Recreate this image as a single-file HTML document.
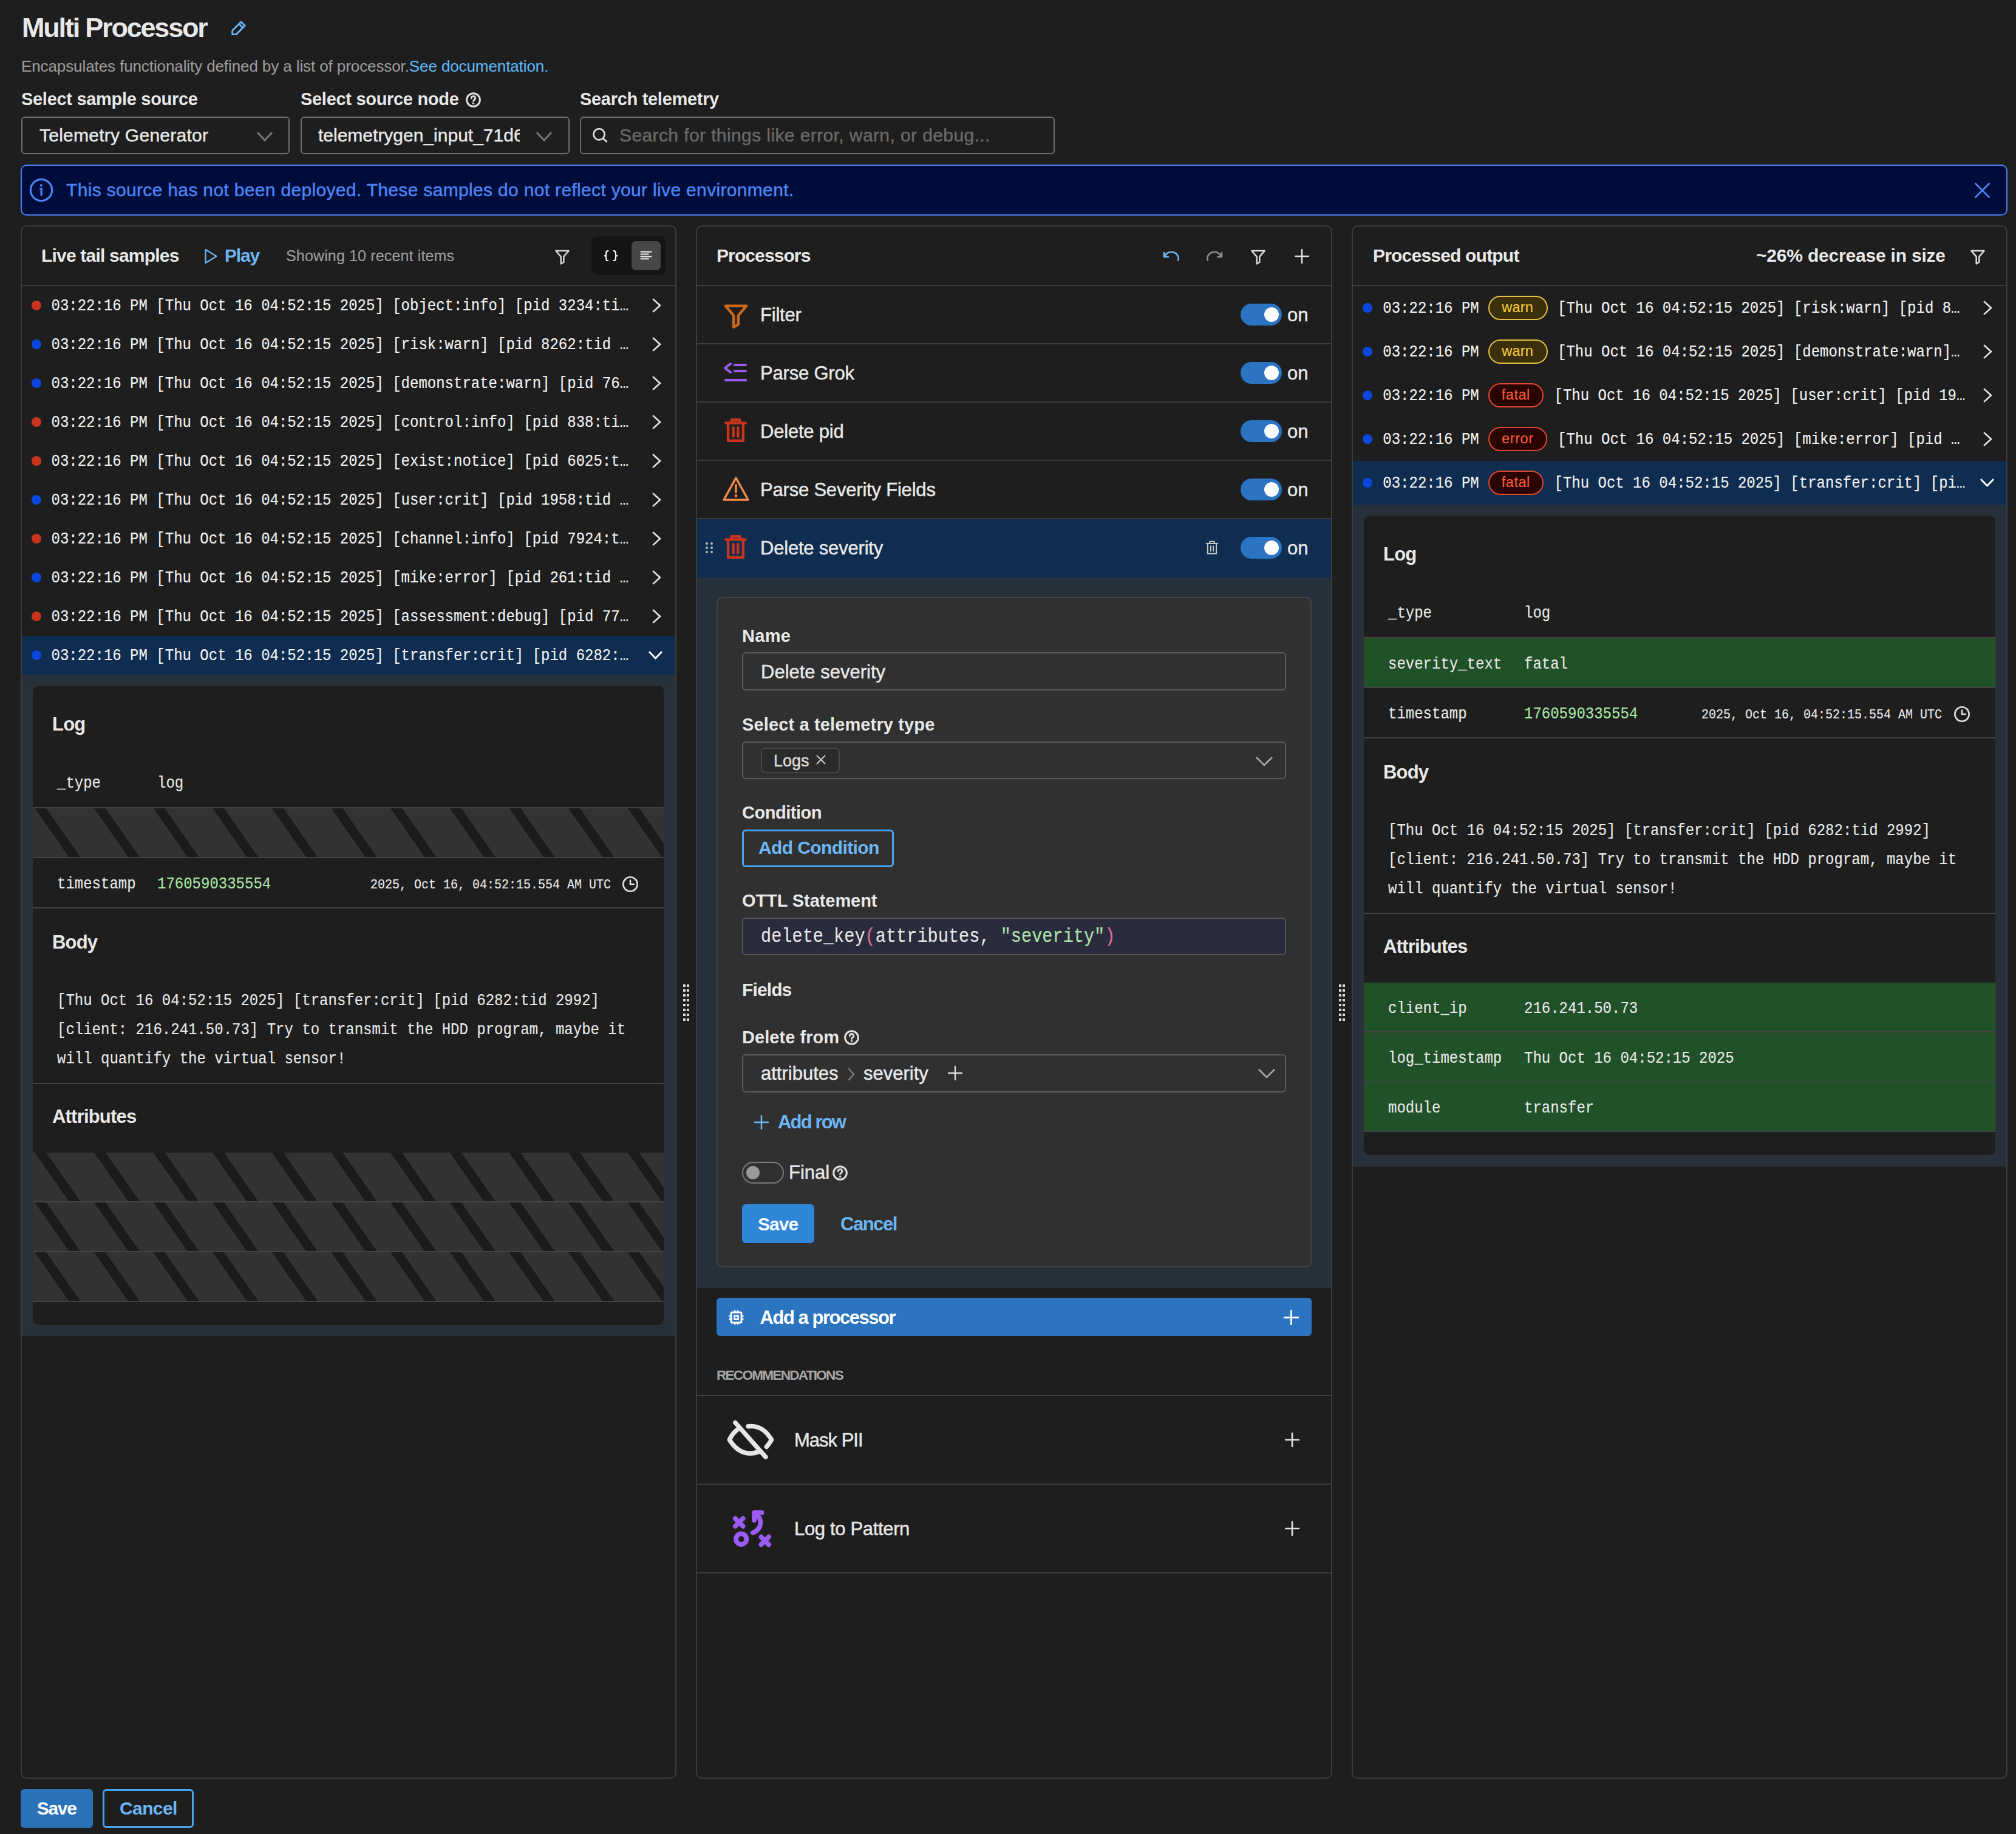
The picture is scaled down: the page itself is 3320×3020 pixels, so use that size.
<!DOCTYPE html><html><head><meta charset="utf-8"><style>
html,body{margin:0;padding:0;background:#1e1e1e;}
body{width:3320px;height:3020px;position:relative;overflow:hidden;}
.r{position:absolute;box-sizing:border-box;}
.t{position:absolute;white-space:pre;line-height:1;}
.s{font-family:"Liberation Sans", sans-serif;}
.m{font-family:"Liberation Mono", monospace;}
@media (max-width: 2400px){ body{zoom:0.5;} }
</style></head><body>
<div class="t s" style="left:36.0px;top:23.2px;font-size:45px;color:#e8e8e8;font-weight:700;letter-spacing:-2.2px;">Multi Processor</div>
<svg class="r" style="left:370px;top:25px;width:50px;height:40px;" viewBox="0 0 2016 1613" fill="none"><path d="M510 1275V1020L1090 440L1345 695L765 1275Z M955 580L1210 835" stroke="#6cb6f5" stroke-width="115" stroke-linejoin="round"/></svg>
<div class="t s" style="left:35.0px;top:96.3px;font-size:26px;color:#9b9b9b;letter-spacing:-0.1px;-webkit-text-stroke:0.15px #9b9b9b;">Encapsulates functionality defined by a list of processor.<span style="color:#5cb6f5;-webkit-text-stroke:0.15px #5cb6f5">See documentation.</span></div>
<div class="t s" style="left:35.0px;top:149.0px;font-size:29px;color:#e8e8e8;font-weight:700;letter-spacing:-0.3px;">Select sample source</div>
<div class="t s" style="left:495.0px;top:149.0px;font-size:29px;color:#e8e8e8;font-weight:700;letter-spacing:-0.3px;">Select source node</div>
<svg class="r" style="left:766.5px;top:152.0px;width:25px;height:25px;" viewBox="0 0 24 24" fill="none"><circle cx="12" cy="12" r="10.4" stroke="#e0e0e0" stroke-width="2.9"/><path d="M8.9 9.4a3.1 3.1 0 1 1 4.6 2.6c-.9.5-1.5 1.1-1.5 2.1" stroke="#e0e0e0" stroke-width="2.7" stroke-linecap="round"/><circle cx="12" cy="17.6" r="1.6" fill="#e0e0e0"/></svg>
<div class="t s" style="left:955.0px;top:149.0px;font-size:29px;color:#e8e8e8;font-weight:700;letter-spacing:-0.3px;">Search telemetry</div>
<div class="r" style="left:35px;top:192px;width:442px;height:62px;border:2px solid #6e6e6e;border-radius:6px;"></div>
<div class="t s" style="left:65.0px;top:207.6px;font-size:30px;color:#e8e8e8;letter-spacing:0.25px;-webkit-text-stroke:0.45px #e8e8e8;">Telemetry Generator</div>
<svg class="r" style="left:422px;top:216px;width:28px;height:17px;overflow:visible;" viewBox="0 0 28 17" fill="none"><path d="M2 2 L14.0 15 L26 2" stroke="#777777" stroke-width="3" stroke-linecap="butt"/></svg>
<div class="r" style="left:495px;top:192px;width:443px;height:62px;border:2px solid #6e6e6e;border-radius:6px;"></div>
<div class="r" style="left:524px;top:200px;width:332px;height:46px;overflow:hidden">
<div class="t s" style="left:0.0px;top:7.6px;font-size:30px;color:#e8e8e8;-webkit-text-stroke:0.45px #e8e8e8;">telemetrygen_input_71d6f0</div>
</div>
<svg class="r" style="left:882px;top:216px;width:28px;height:17px;overflow:visible;" viewBox="0 0 28 17" fill="none"><path d="M2 2 L14.0 15 L26 2" stroke="#777777" stroke-width="3" stroke-linecap="butt"/></svg>
<div class="r" style="left:955px;top:192px;width:782px;height:62px;border:2px solid #6e6e6e;border-radius:6px;"></div>
<svg class="r" style="left:974px;top:208px;width:30px;height:30px;" viewBox="0 0 30 30" fill="none"><circle cx="12.6" cy="13.2" r="9.1" stroke="#dddddd" stroke-width="2.8"/><path d="M19.4 20L25.6 25.8" stroke="#dddddd" stroke-width="2.8" stroke-linecap="butt"/></svg>
<div class="t s" style="left:1020.0px;top:207.6px;font-size:30px;color:#6a6a6a;letter-spacing:0.4px;-webkit-text-stroke:0.45px #6a6a6a;">Search for things like error, warn, or debug...</div>
<div class="r" style="left:34px;top:271px;width:3272px;height:84px;background:#000d3b;border:2px solid #4a7ef4;border-radius:10px;"></div>
<svg class="r" style="left:48px;top:293px;width:40px;height:40px;" viewBox="0 0 24 24" fill="none"><circle cx="12" cy="12" r="10.6" stroke="#4d85f7" stroke-width="1.9"/><path d="M11.2 10.8h.9v6.2" stroke="#4d85f7" stroke-width="1.9" stroke-linecap="round"/><circle cx="11.9" cy="7.3" r="1.2" fill="#4d85f7"/></svg>
<div class="t s" style="left:109.0px;top:297.9px;font-size:30px;color:#4d85f7;letter-spacing:0.33px;-webkit-text-stroke:0.45px #4d85f7;">This source has not been deployed. These samples do not reflect your live environment.</div>
<svg class="r" style="left:3251px;top:300px;width:27px;height:27px;" viewBox="0 0 27 27" fill="none"><path d="M1.5 1.5L25.5 25.5M25.5 1.5L1.5 25.5" stroke="#4d85f7" stroke-width="2.8"/></svg>
<div class="r" style="left:34px;top:371px;width:1080px;height:2558px;background:#1e1e1e;border:2px solid #3d3d3d;border-radius:10px;"></div>
<div class="r" style="left:36px;top:469px;width:1076px;height:2px;background:#3d3d3d;"></div>
<div class="t s" style="left:68.0px;top:405.6px;font-size:30px;color:#e8e8e8;font-weight:700;letter-spacing:-0.8px;">Live tail samples</div>
<svg class="r" style="left:336px;top:409px;width:23px;height:26px;" viewBox="0 0 23 26" fill="none"><path d="M2.5 2L20.5 13L2.5 24z" stroke="#6cb6f5" stroke-width="2.2" stroke-linejoin="round"/></svg>
<div class="t s" style="left:370.0px;top:405.6px;font-size:30px;color:#6cb6f5;font-weight:700;letter-spacing:-1.2px;">Play</div>
<div class="t s" style="left:471.0px;top:409.3px;font-size:25px;color:#9b9b9b;letter-spacing:0.15px;-webkit-text-stroke:0.2px #9b9b9b;">Showing 10 recent items</div>
<svg class="r" style="left:912px;top:409px;width:28px;height:28px;" viewBox="0 0 24 24" fill="none"><path d="M3 3.5h18l-7 8.2v7.8l-4 2.2v-10z" stroke="#d0d0d0" stroke-width="2.2" stroke-linejoin="round"/></svg>
<div class="r" style="left:974px;top:389px;width:122px;height:64px;background:#141414;border-radius:10px;"></div>
<svg class="r" style="left:994px;top:411.5px;width:24px;height:18.5px;" viewBox="0 0 26 20" fill="none"><path d="M8 1.2C5.6 1.2 4.6 2 4.6 4V7.6C4.6 9 3.6 10 1.6 10C3.6 10 4.6 11 4.6 12.4V16C4.6 18 5.6 18.8 8 18.8M18 1.2C20.4 1.2 21.4 2 21.4 4V7.6C21.4 9 22.4 10 24.4 10C22.4 10 21.4 11 21.4 12.4V16C21.4 18 20.4 18.8 18 18.8" stroke="#ffffff" stroke-width="2.2" stroke-linecap="round" stroke-linejoin="round"/></svg>
<div class="r" style="left:1040px;top:397px;width:48px;height:48px;background:#474747;border-radius:7px;"></div>
<svg class="r" style="left:1054px;top:413px;width:20px;height:15px;" viewBox="0 0 20 15" fill="none"><path d="M1.5 1.8H18.5M1.5 5.6H14M1.5 9.4H18.5M1.5 13.2H14" stroke="#f0f0f0" stroke-width="2" stroke-linecap="round"/></svg>
<div class="r" style="left:52px;top:495px;width:16px;height:16px;background:#c8341c;border-radius:8px;"></div>
<div class="t m" style="left:84.5px;top:493.1px;font-size:24px;color:#f2f2f2;transform:scaleY(1.14);transform-origin:0 18.39px;-webkit-text-stroke:0.15px #f2f2f2;">03:22:16 PM [Thu Oct 16 04:52:15 2025] [object:info] [pid 3234:ti…</div>
<svg class="r" style="left:1074px;top:491px;width:15px;height:24px;" viewBox="0 0 15 24" fill="none"><path d="M2 2 L13 12.0 L2 22" stroke="#e8e8e8" stroke-width="2.6" stroke-linecap="square"/></svg>
<div class="r" style="left:52px;top:559px;width:16px;height:16px;background:#0b47dd;border-radius:8px;"></div>
<div class="t m" style="left:84.5px;top:557.1px;font-size:24px;color:#f2f2f2;transform:scaleY(1.14);transform-origin:0 18.39px;-webkit-text-stroke:0.15px #f2f2f2;">03:22:16 PM [Thu Oct 16 04:52:15 2025] [risk:warn] [pid 8262:tid …</div>
<svg class="r" style="left:1074px;top:555px;width:15px;height:24px;" viewBox="0 0 15 24" fill="none"><path d="M2 2 L13 12.0 L2 22" stroke="#e8e8e8" stroke-width="2.6" stroke-linecap="square"/></svg>
<div class="r" style="left:52px;top:623px;width:16px;height:16px;background:#0b47dd;border-radius:8px;"></div>
<div class="t m" style="left:84.5px;top:621.1px;font-size:24px;color:#f2f2f2;transform:scaleY(1.14);transform-origin:0 18.39px;-webkit-text-stroke:0.15px #f2f2f2;">03:22:16 PM [Thu Oct 16 04:52:15 2025] [demonstrate:warn] [pid 76…</div>
<svg class="r" style="left:1074px;top:619px;width:15px;height:24px;" viewBox="0 0 15 24" fill="none"><path d="M2 2 L13 12.0 L2 22" stroke="#e8e8e8" stroke-width="2.6" stroke-linecap="square"/></svg>
<div class="r" style="left:52px;top:687px;width:16px;height:16px;background:#c8341c;border-radius:8px;"></div>
<div class="t m" style="left:84.5px;top:685.1px;font-size:24px;color:#f2f2f2;transform:scaleY(1.14);transform-origin:0 18.39px;-webkit-text-stroke:0.15px #f2f2f2;">03:22:16 PM [Thu Oct 16 04:52:15 2025] [control:info] [pid 838:ti…</div>
<svg class="r" style="left:1074px;top:683px;width:15px;height:24px;" viewBox="0 0 15 24" fill="none"><path d="M2 2 L13 12.0 L2 22" stroke="#e8e8e8" stroke-width="2.6" stroke-linecap="square"/></svg>
<div class="r" style="left:52px;top:751px;width:16px;height:16px;background:#c8341c;border-radius:8px;"></div>
<div class="t m" style="left:84.5px;top:749.1px;font-size:24px;color:#f2f2f2;transform:scaleY(1.14);transform-origin:0 18.39px;-webkit-text-stroke:0.15px #f2f2f2;">03:22:16 PM [Thu Oct 16 04:52:15 2025] [exist:notice] [pid 6025:t…</div>
<svg class="r" style="left:1074px;top:747px;width:15px;height:24px;" viewBox="0 0 15 24" fill="none"><path d="M2 2 L13 12.0 L2 22" stroke="#e8e8e8" stroke-width="2.6" stroke-linecap="square"/></svg>
<div class="r" style="left:52px;top:815px;width:16px;height:16px;background:#0b47dd;border-radius:8px;"></div>
<div class="t m" style="left:84.5px;top:813.1px;font-size:24px;color:#f2f2f2;transform:scaleY(1.14);transform-origin:0 18.39px;-webkit-text-stroke:0.15px #f2f2f2;">03:22:16 PM [Thu Oct 16 04:52:15 2025] [user:crit] [pid 1958:tid …</div>
<svg class="r" style="left:1074px;top:811px;width:15px;height:24px;" viewBox="0 0 15 24" fill="none"><path d="M2 2 L13 12.0 L2 22" stroke="#e8e8e8" stroke-width="2.6" stroke-linecap="square"/></svg>
<div class="r" style="left:52px;top:879px;width:16px;height:16px;background:#c8341c;border-radius:8px;"></div>
<div class="t m" style="left:84.5px;top:877.1px;font-size:24px;color:#f2f2f2;transform:scaleY(1.14);transform-origin:0 18.39px;-webkit-text-stroke:0.15px #f2f2f2;">03:22:16 PM [Thu Oct 16 04:52:15 2025] [channel:info] [pid 7924:t…</div>
<svg class="r" style="left:1074px;top:875px;width:15px;height:24px;" viewBox="0 0 15 24" fill="none"><path d="M2 2 L13 12.0 L2 22" stroke="#e8e8e8" stroke-width="2.6" stroke-linecap="square"/></svg>
<div class="r" style="left:52px;top:943px;width:16px;height:16px;background:#0b47dd;border-radius:8px;"></div>
<div class="t m" style="left:84.5px;top:941.1px;font-size:24px;color:#f2f2f2;transform:scaleY(1.14);transform-origin:0 18.39px;-webkit-text-stroke:0.15px #f2f2f2;">03:22:16 PM [Thu Oct 16 04:52:15 2025] [mike:error] [pid 261:tid …</div>
<svg class="r" style="left:1074px;top:939px;width:15px;height:24px;" viewBox="0 0 15 24" fill="none"><path d="M2 2 L13 12.0 L2 22" stroke="#e8e8e8" stroke-width="2.6" stroke-linecap="square"/></svg>
<div class="r" style="left:52px;top:1007px;width:16px;height:16px;background:#c8341c;border-radius:8px;"></div>
<div class="t m" style="left:84.5px;top:1005.1px;font-size:24px;color:#f2f2f2;transform:scaleY(1.14);transform-origin:0 18.39px;-webkit-text-stroke:0.15px #f2f2f2;">03:22:16 PM [Thu Oct 16 04:52:15 2025] [assessment:debug] [pid 77…</div>
<svg class="r" style="left:1074px;top:1003px;width:15px;height:24px;" viewBox="0 0 15 24" fill="none"><path d="M2 2 L13 12.0 L2 22" stroke="#e8e8e8" stroke-width="2.6" stroke-linecap="square"/></svg>
<div class="r" style="left:36px;top:1047px;width:1076px;height:64px;background:#0f2d50;"></div>
<div class="r" style="left:52px;top:1071px;width:16px;height:16px;background:#0b47dd;border-radius:8px;"></div>
<div class="t m" style="left:84.5px;top:1069.1px;font-size:24px;color:#f2f2f2;transform:scaleY(1.14);transform-origin:0 18.39px;-webkit-text-stroke:0.15px #f2f2f2;">03:22:16 PM [Thu Oct 16 04:52:15 2025] [transfer:crit] [pid 6282:…</div>
<svg class="r" style="left:1067.4px;top:1070.8px;width:25px;height:15px;overflow:visible;" viewBox="0 0 25 15" fill="none"><path d="M2 2 L12.5 13 L23 2" stroke="#ffffff" stroke-width="2.8" stroke-linecap="butt"/></svg>
<div class="r" style="left:36px;top:1111px;width:1076px;height:1089px;background:#27313c;"></div>
<div class="r" style="left:52px;top:1127px;width:1043px;height:1057px;background:#1e1e1e;border:2px solid #313131;border-radius:11px;"></div>
<div class="t s" style="left:86.0px;top:1176.7px;font-size:31px;color:#e8e8e8;font-weight:700;letter-spacing:-0.8px;">Log</div>
<div class="t m" style="left:94.0px;top:1278.6px;font-size:24px;color:#e8e8e8;transform:scaleY(1.14);transform-origin:0 18.39px;-webkit-text-stroke:0.15px #e8e8e8;">_type</div>
<div class="t m" style="left:259.0px;top:1278.6px;font-size:24px;color:#e8e8e8;transform:scaleY(1.14);transform-origin:0 18.39px;-webkit-text-stroke:0.15px #e8e8e8;">log</div>
<div class="r" style="left:54px;top:1329px;width:1039px;height:2px;background:#444444;"></div>
<div class="r" style="left:54px;top:1331px;width:1039px;height:80px;background:repeating-linear-gradient(55deg,#333333 0px,#333333 48.5px,#1b1b1b 48.5px,#1b1b1b 64px,#333333 64px,#333333 80px);"></div>
<div class="r" style="left:54px;top:1411px;width:1039px;height:2px;background:#444444;"></div>
<div class="t m" style="left:94.0px;top:1444.6px;font-size:24px;color:#e8e8e8;transform:scaleY(1.14);transform-origin:0 18.39px;-webkit-text-stroke:0.15px #e8e8e8;">timestamp</div>
<div class="t m" style="left:259.0px;top:1444.6px;font-size:24px;color:#a8e6a3;transform:scaleY(1.14);transform-origin:0 18.39px;-webkit-text-stroke:0.15px #a8e6a3;">1760590335554</div>
<div class="t m" style="left:610.0px;top:1447.7px;font-size:20px;color:#e8e8e8;transform:scaleY(1.14);transform-origin:0 15.32px;-webkit-text-stroke:0.15px #e8e8e8;">2025, Oct 16, 04:52:15.554 AM UTC</div>
<svg class="r" style="left:1024px;top:1442px;width:28px;height:28px;" viewBox="0 0 24 24" fill="none"><circle cx="12" cy="12" r="10" stroke="#e0e0e0" stroke-width="2.2"/><path d="M12 6.5V12h5" stroke="#e0e0e0" stroke-width="2.2" stroke-linecap="round"/></svg>
<div class="r" style="left:54px;top:1494px;width:1039px;height:2px;background:#444444;"></div>
<div class="t s" style="left:86.0px;top:1535.7px;font-size:31px;color:#e8e8e8;font-weight:700;letter-spacing:-0.8px;">Body</div>
<div class="t m" style="left:94.0px;top:1636.6px;font-size:24px;color:#e8e8e8;transform:scaleY(1.14);transform-origin:0 18.39px;-webkit-text-stroke:0.15px #e8e8e8;">[Thu Oct 16 04:52:15 2025] [transfer:crit] [pid 6282:tid 2992]</div>
<div class="t m" style="left:94.0px;top:1684.6px;font-size:24px;color:#e8e8e8;transform:scaleY(1.14);transform-origin:0 18.39px;-webkit-text-stroke:0.15px #e8e8e8;">[client: 216.241.50.73] Try to transmit the HDD program, maybe it</div>
<div class="t m" style="left:94.0px;top:1732.6px;font-size:24px;color:#e8e8e8;transform:scaleY(1.14);transform-origin:0 18.39px;-webkit-text-stroke:0.15px #e8e8e8;">will quantify the virtual sensor!</div>
<div class="r" style="left:54px;top:1783px;width:1039px;height:2px;background:#444444;"></div>
<div class="t s" style="left:86.0px;top:1822.7px;font-size:31px;color:#e8e8e8;font-weight:700;letter-spacing:-0.8px;">Attributes</div>
<div class="r" style="left:54px;top:1898px;width:1039px;height:80px;background:repeating-linear-gradient(55deg,#333333 0px,#333333 48.5px,#1b1b1b 48.5px,#1b1b1b 64px,#333333 64px,#333333 80px);"></div>
<div class="r" style="left:54px;top:1978px;width:1039px;height:2px;background:#444444;"></div>
<div class="r" style="left:54px;top:1980px;width:1039px;height:80px;background:repeating-linear-gradient(55deg,#333333 0px,#333333 48.5px,#1b1b1b 48.5px,#1b1b1b 64px,#333333 64px,#333333 80px);"></div>
<div class="r" style="left:54px;top:2060px;width:1039px;height:2px;background:#444444;"></div>
<div class="r" style="left:54px;top:2062px;width:1039px;height:80px;background:repeating-linear-gradient(55deg,#333333 0px,#333333 48.5px,#1b1b1b 48.5px,#1b1b1b 64px,#333333 64px,#333333 80px);"></div>
<div class="r" style="left:54px;top:2142px;width:1039px;height:2px;background:#444444;"></div>
<div class="r" style="left:1146px;top:371px;width:1048px;height:2558px;background:#1e1e1e;border:2px solid #3d3d3d;border-radius:10px;"></div>
<div class="r" style="left:1148px;top:469px;width:1044px;height:2px;background:#3d3d3d;"></div>
<div class="t s" style="left:1180.0px;top:405.6px;font-size:30px;color:#e8e8e8;font-weight:700;letter-spacing:-0.9px;">Processors</div>
<svg class="r" style="left:1914px;top:414px;width:28px;height:16px;" viewBox="0 0 28 16" fill="none"><path d="M26 15A11 10 0 0 0 4 8" stroke="#6cb6f5" stroke-width="2.6" stroke-linecap="round"/><path d="M3 2V9H10" stroke="#6cb6f5" stroke-width="2.6" stroke-linecap="round" stroke-linejoin="round"/></svg>
<svg class="r" style="left:1987px;top:414px;width:28px;height:16px;" viewBox="0 0 28 16" fill="none"><path d="M2 15A11 10 0 0 1 24 8" stroke="#8a8a8a" stroke-width="2.6" stroke-linecap="round"/><path d="M25 2V9H18" stroke="#8a8a8a" stroke-width="2.6" stroke-linecap="round" stroke-linejoin="round"/></svg>
<svg class="r" style="left:2058px;top:409px;width:28px;height:28px;" viewBox="0 0 24 24" fill="none"><path d="M3 3.5h18l-7 8.2v7.8l-4 2.2v-10z" stroke="#d8d8d8" stroke-width="2.2" stroke-linejoin="round"/></svg>
<svg class="r" style="left:2132px;top:410px;width:24px;height:24px;" viewBox="0 0 24 24" fill="none"><path d="M12.0 1V23M1 12.0H23" stroke="#e0e0e0" stroke-width="2.6" stroke-linecap="round"/></svg>
<div class="r" style="left:1148px;top:565px;width:1044px;height:2px;background:#3d3d3d;"></div>
<div class="t s" style="left:1252.0px;top:502.7px;font-size:31px;color:#e8e8e8;letter-spacing:-0.2px;-webkit-text-stroke:0.45px #e8e8e8;">Filter</div>
<div class="r" style="left:2043px;top:499.5px;width:68px;height:36px;background:#2b74c4;border-radius:18px;"></div>
<div class="r" style="left:2082.3px;top:505.5px;width:24px;height:24px;background:#ffffff;border-radius:12px;"></div>
<div class="t s" style="left:2120.0px;top:502.7px;font-size:31px;color:#e8e8e8;-webkit-text-stroke:0.45px #e8e8e8;">on</div>
<div class="r" style="left:1148px;top:661px;width:1044px;height:2px;background:#3d3d3d;"></div>
<div class="t s" style="left:1252.0px;top:598.7px;font-size:31px;color:#e8e8e8;letter-spacing:-0.2px;-webkit-text-stroke:0.45px #e8e8e8;">Parse Grok</div>
<div class="r" style="left:2043px;top:595.5px;width:68px;height:36px;background:#2b74c4;border-radius:18px;"></div>
<div class="r" style="left:2082.3px;top:601.5px;width:24px;height:24px;background:#ffffff;border-radius:12px;"></div>
<div class="t s" style="left:2120.0px;top:598.7px;font-size:31px;color:#e8e8e8;-webkit-text-stroke:0.45px #e8e8e8;">on</div>
<div class="r" style="left:1148px;top:757px;width:1044px;height:2px;background:#3d3d3d;"></div>
<div class="t s" style="left:1252.0px;top:694.7px;font-size:31px;color:#e8e8e8;letter-spacing:-0.2px;-webkit-text-stroke:0.45px #e8e8e8;">Delete pid</div>
<div class="r" style="left:2043px;top:691.5px;width:68px;height:36px;background:#2b74c4;border-radius:18px;"></div>
<div class="r" style="left:2082.3px;top:697.5px;width:24px;height:24px;background:#ffffff;border-radius:12px;"></div>
<div class="t s" style="left:2120.0px;top:694.7px;font-size:31px;color:#e8e8e8;-webkit-text-stroke:0.45px #e8e8e8;">on</div>
<div class="r" style="left:1148px;top:853px;width:1044px;height:2px;background:#3d3d3d;"></div>
<div class="t s" style="left:1252.0px;top:790.7px;font-size:31px;color:#e8e8e8;letter-spacing:-0.2px;-webkit-text-stroke:0.45px #e8e8e8;">Parse Severity Fields</div>
<div class="r" style="left:2043px;top:787.5px;width:68px;height:36px;background:#2b74c4;border-radius:18px;"></div>
<div class="r" style="left:2082.3px;top:793.5px;width:24px;height:24px;background:#ffffff;border-radius:12px;"></div>
<div class="t s" style="left:2120.0px;top:790.7px;font-size:31px;color:#e8e8e8;-webkit-text-stroke:0.45px #e8e8e8;">on</div>
<div class="r" style="left:1148px;top:855px;width:1044px;height:96px;background:#0f2d50;"></div>
<div class="t s" style="left:1252.0px;top:886.7px;font-size:31px;color:#e8e8e8;letter-spacing:-0.2px;-webkit-text-stroke:0.45px #e8e8e8;">Delete severity</div>
<div class="r" style="left:2043px;top:883.5px;width:68px;height:36px;background:#2b74c4;border-radius:18px;"></div>
<div class="r" style="left:2082.3px;top:889.5px;width:24px;height:24px;background:#ffffff;border-radius:12px;"></div>
<div class="t s" style="left:2120.0px;top:886.7px;font-size:31px;color:#e8e8e8;-webkit-text-stroke:0.45px #e8e8e8;">on</div>
<svg class="r" style="left:1189px;top:497px;width:46px;height:46px;" viewBox="0 0 24 24" fill="none"><path d="M3 3.5h18l-7 8.2v7.8l-4 2.2v-10z" stroke="#c8691e" stroke-width="2.3" stroke-linejoin="round"/></svg>
<svg class="r" style="left:1191px;top:597px;width:40px;height:32px;" viewBox="0 0 40 32" fill="none"><path d="M12 2L3 9L12 16" stroke="#9b5cf6" stroke-width="4" stroke-linecap="round" stroke-linejoin="round"/><path d="M19 4H37M19 14H37M4 29H37" stroke="#9b5cf6" stroke-width="4" stroke-linecap="round"/></svg>
<svg class="r" style="left:1192px;top:687px;width:39px;height:42px;" viewBox="0 0 20 22" fill="none"><path d="M1.5 5h17M6.5 5V2.2h7V5M3.5 5v15.3h13V5M8 9v7.5M12 9v7.5" stroke="#c8341c" stroke-width="2.3" stroke-linejoin="round" stroke-linecap="round"/></svg>
<svg class="r" style="left:1189px;top:784px;width:46px;height:42px;" viewBox="0 0 46 42" fill="none"><path d="M23 3L43 39H3z" stroke="#f08a4b" stroke-width="3.6" stroke-linejoin="round"/><path d="M23 15V26" stroke="#f08a4b" stroke-width="3.8" stroke-linecap="round"/><circle cx="23" cy="32.5" r="2.4" fill="#f08a4b"/></svg>
<svg class="r" style="left:1192px;top:879px;width:39px;height:42px;" viewBox="0 0 20 22" fill="none"><path d="M1.5 5h17M6.5 5V2.2h7V5M3.5 5v15.3h13V5M8 9v7.5M12 9v7.5" stroke="#c8341c" stroke-width="2.3" stroke-linejoin="round" stroke-linecap="round"/></svg>
<div class="r" style="left:1162px;top:893px;width:4px;height:4px;background:#bbbbbb;border-radius:2px;"></div>
<div class="r" style="left:1162px;top:900px;width:4px;height:4px;background:#bbbbbb;border-radius:2px;"></div>
<div class="r" style="left:1162px;top:907px;width:4px;height:4px;background:#bbbbbb;border-radius:2px;"></div>
<div class="r" style="left:1170px;top:893px;width:4px;height:4px;background:#bbbbbb;border-radius:2px;"></div>
<div class="r" style="left:1170px;top:900px;width:4px;height:4px;background:#bbbbbb;border-radius:2px;"></div>
<div class="r" style="left:1170px;top:907px;width:4px;height:4px;background:#bbbbbb;border-radius:2px;"></div>
<svg class="r" style="left:1985px;top:889px;width:22px;height:25px;" viewBox="0 0 20 22" fill="none"><path d="M1.5 5h17M6.5 5V2.2h7V5M3.5 5v15.3h13V5M8 9v7.5M12 9v7.5" stroke="#c8c8c8" stroke-width="1.8" stroke-linejoin="round" stroke-linecap="round"/></svg>
<div class="r" style="left:1148px;top:951px;width:1044px;height:1170px;background:#27313c;"></div>
<div class="r" style="left:1180px;top:983px;width:980px;height:1104px;background:#303030;border:2px solid #434343;border-radius:10px;"></div>
<div class="t s" style="left:1222.0px;top:1033.4px;font-size:29px;color:#e8e8e8;font-weight:700;letter-spacing:0.333px;">Name</div>
<div class="r" style="left:1222px;top:1074px;width:896px;height:63px;border:2px solid #5c5c5c;border-radius:6px;"></div>
<div class="t s" style="left:1253.0px;top:1090.5px;font-size:31px;color:#e8e8e8;-webkit-text-stroke:0.45px #e8e8e8;">Delete severity</div>
<div class="t s" style="left:1222.0px;top:1179.2px;font-size:29px;color:#e8e8e8;font-weight:700;letter-spacing:0.136px;">Select a telemetry type</div>
<div class="r" style="left:1222px;top:1221px;width:896px;height:62px;border:2px solid #5c5c5c;border-radius:6px;"></div>
<div class="r" style="left:1253px;top:1231px;width:130px;height:42px;background:#2b2b2b;border:2px solid #474747;border-radius:7px;"></div>
<div class="t s" style="left:1274.0px;top:1240.1px;font-size:27px;color:#dddddd;-webkit-text-stroke:0.45px #dddddd;">Logs</div>
<svg class="r" style="left:1343px;top:1242px;width:18px;height:18px;" viewBox="0 0 18 18" fill="none"><path d="M2 2L16 16M16 2L2 16" stroke="#cccccc" stroke-width="2"/></svg>
<svg class="r" style="left:2067px;top:1245px;width:30px;height:17px;overflow:visible;" viewBox="0 0 30 17" fill="none"><path d="M2 2 L15.0 15 L28 2" stroke="#aaaaaa" stroke-width="2.6" stroke-linecap="butt"/></svg>
<div class="t s" style="left:1222.0px;top:1324.0px;font-size:29px;color:#e8e8e8;font-weight:700;letter-spacing:-0.463px;">Condition</div>
<div class="r" style="left:1222px;top:1366px;width:250px;height:62px;border:3px solid #4aa3ef;border-radius:6px;"></div>
<div class="t s" style="left:1249.0px;top:1381.1px;font-size:30px;color:#6cb6f5;font-weight:700;letter-spacing:-0.6px;">Add Condition</div>
<div class="t s" style="left:1222.0px;top:1469.4px;font-size:29px;color:#e8e8e8;font-weight:700;letter-spacing:-0.077px;">OTTL Statement</div>
<div class="r" style="left:1222px;top:1511px;width:896px;height:62px;background:#2a2b3c;border:2px solid #555555;border-radius:6px;"></div>
<div class="t m" style="left:1253.0px;top:1530.1px;font-size:28.6px;color:#e6e6e6;transform:scaleY(1.14);transform-origin:0 21.91px;-webkit-text-stroke:0.15px #e6e6e6;">delete_key<span style="color:#e0608a">(</span>attributes, <span style="color:#a6e3a1">"severity"</span><span style="color:#e0608a">)</span></div>
<div class="t s" style="left:1222.0px;top:1615.1px;font-size:30px;color:#e8e8e8;font-weight:700;letter-spacing:-0.88px;">Fields</div>
<div class="t s" style="left:1222.0px;top:1694.4px;font-size:29px;color:#e8e8e8;font-weight:700;letter-spacing:0.05px;">Delete from</div>
<svg class="r" style="left:1389.5px;top:1695.5px;width:25px;height:25px;" viewBox="0 0 24 24" fill="none"><circle cx="12" cy="12" r="10.4" stroke="#e0e0e0" stroke-width="2.9"/><path d="M8.9 9.4a3.1 3.1 0 1 1 4.6 2.6c-.9.5-1.5 1.1-1.5 2.1" stroke="#e0e0e0" stroke-width="2.7" stroke-linecap="round"/><circle cx="12" cy="17.6" r="1.6" fill="#e0e0e0"/></svg>
<div class="r" style="left:1222px;top:1736px;width:896px;height:63px;border:2px solid #5c5c5c;border-radius:6px;"></div>
<div class="t s" style="left:1253.0px;top:1751.7px;font-size:31px;color:#e8e8e8;-webkit-text-stroke:0.45px #e8e8e8;">attributes</div>
<svg class="r" style="left:1396px;top:1758px;width:12px;height:22px;" viewBox="0 0 12 22" fill="none"><path d="M2 2 L10 11.0 L2 20" stroke="#888888" stroke-width="2" stroke-linecap="square"/></svg>
<div class="t s" style="left:1422.0px;top:1751.7px;font-size:31px;color:#e8e8e8;-webkit-text-stroke:0.45px #e8e8e8;">severity</div>
<svg class="r" style="left:1561px;top:1755px;width:24px;height:24px;" viewBox="0 0 24 24" fill="none"><path d="M12.0 1V23M1 12.0H23" stroke="#dddddd" stroke-width="2.4" stroke-linecap="round"/></svg>
<svg class="r" style="left:2071px;top:1759px;width:30px;height:17px;overflow:visible;" viewBox="0 0 30 17" fill="none"><path d="M2 2 L15.0 15 L28 2" stroke="#aaaaaa" stroke-width="2.6" stroke-linecap="butt"/></svg>
<svg class="r" style="left:1242px;top:1836px;width:24px;height:24px;" viewBox="0 0 24 24" fill="none"><path d="M12.0 1V23M1 12.0H23" stroke="#6cb6f5" stroke-width="2.6" stroke-linecap="round"/></svg>
<div class="t s" style="left:1281.0px;top:1832.1px;font-size:31px;color:#6cb6f5;font-weight:700;letter-spacing:-1.833px;">Add row</div>
<div class="r" style="left:1222px;top:1913px;width:69px;height:36px;border:2px solid #7a7a7a;border-radius:18px;"></div>
<div class="r" style="left:1229px;top:1920px;width:22px;height:22px;background:#9a9a9a;border-radius:11px;"></div>
<div class="t s" style="left:1299.0px;top:1914.7px;font-size:31px;color:#e8e8e8;-webkit-text-stroke:0.45px #e8e8e8;">Final</div>
<svg class="r" style="left:1370.5px;top:1918.5px;width:25px;height:25px;" viewBox="0 0 24 24" fill="none"><circle cx="12" cy="12" r="10.4" stroke="#e0e0e0" stroke-width="2.9"/><path d="M8.9 9.4a3.1 3.1 0 1 1 4.6 2.6c-.9.5-1.5 1.1-1.5 2.1" stroke="#e0e0e0" stroke-width="2.7" stroke-linecap="round"/><circle cx="12" cy="17.6" r="1.6" fill="#e0e0e0"/></svg>
<div class="r" style="left:1222px;top:1983px;width:119px;height:64px;background:#2f86d9;border-radius:6px;"></div>
<div class="t s" style="left:1248.0px;top:2000.6px;font-size:30px;color:#ffffff;font-weight:700;letter-spacing:-1.0px;">Save</div>
<div class="t s" style="left:1384.0px;top:1999.7px;font-size:31px;color:#6cb6f5;font-weight:700;letter-spacing:-1.48px;">Cancel</div>
<div class="r" style="left:1180px;top:2137px;width:980px;height:63px;background:#2b74c0;border-radius:6px;"></div>
<svg class="r" style="left:1198px;top:2155px;width:29px;height:29px;" viewBox="0 0 24 24" fill="none"><rect x="5" y="5" width="14" height="14" rx="1.5" stroke="#fff" stroke-width="2.4"/><rect x="9.5" y="9.5" width="5" height="5" stroke="#fff" stroke-width="2.2"/><path d="M10 2v3M14 2v3M10 19v3M14 19v3M2 10h3M2 14h3M19 10h3M19 14h3" stroke="#fff" stroke-width="2"/></svg>
<div class="t s" style="left:1251.6px;top:2153.7px;font-size:31px;color:#ffffff;font-weight:700;letter-spacing:-1.471px;">Add a processor</div>
<svg class="r" style="left:2114px;top:2157px;width:25px;height:25px;" viewBox="0 0 25 25" fill="none"><path d="M12.5 1V24M1 12.5H24" stroke="#ffffff" stroke-width="2.8" stroke-linecap="round"/></svg>
<div class="t s" style="left:1180.0px;top:2254.4px;font-size:22.5px;color:#a8a8a8;font-weight:700;letter-spacing:-1.692px;">RECOMMENDATIONS</div>
<div class="r" style="left:1148px;top:2297px;width:1044px;height:2px;background:#3d3d3d;"></div>
<svg class="r" style="left:1190px;top:2330px;width:100px;height:80px;" viewBox="0 0 2016 1613" fill="none"><g stroke="#e6e6e6" stroke-width="150" stroke-linecap="round" stroke-linejoin="round"><path d="M420 255L1430 1395"/><path d="M850 378C880 372 940 370 1000 375C1230 390 1460 540 1625 822C1580 900 1520 985 1458 1058"/><path d="M510 470C400 550 300 670 225 820C420 1130 660 1275 920 1275C1030 1275 1120 1250 1190 1228"/></g></svg>
<div class="t s" style="left:1308.0px;top:2356.4px;font-size:31px;color:#e8e8e8;letter-spacing:-1.0px;-webkit-text-stroke:0.45px #e8e8e8;">Mask PII</div>
<svg class="r" style="left:2116px;top:2359px;width:24px;height:24px;" viewBox="0 0 24 24" fill="none"><path d="M12.0 1V23M1 12.0H23" stroke="#e0e0e0" stroke-width="2.6" stroke-linecap="round"/></svg>
<div class="r" style="left:1148px;top:2443px;width:1044px;height:2px;background:#3d3d3d;"></div>
<svg class="r" style="left:1200px;top:2480px;width:80px;height:75px;" viewBox="0 0 1956 1834" fill="none"><g stroke="#9b5cf6" stroke-width="190" stroke-linecap="round" stroke-linejoin="round" fill="none"><path d="M265 500L575 815M575 500L265 815M1305 1240L1615 1555M1615 1240L1305 1555"/><circle cx="505" cy="1330" r="212"/><path d="M975 1080C1180 990 1270 850 1280 680C1290 520 1220 400 1060 290"/><path d="M1030 570L1030 265L1335 265"/></g></svg>
<div class="t s" style="left:1308.0px;top:2502.3px;font-size:31px;color:#e8e8e8;letter-spacing:-0.338px;-webkit-text-stroke:0.45px #e8e8e8;">Log to Pattern</div>
<svg class="r" style="left:2116px;top:2505px;width:24px;height:24px;" viewBox="0 0 24 24" fill="none"><path d="M12.0 1V23M1 12.0H23" stroke="#e0e0e0" stroke-width="2.6" stroke-linecap="round"/></svg>
<div class="r" style="left:1148px;top:2589px;width:1044px;height:2px;background:#3d3d3d;"></div>
<div class="r" style="left:2226px;top:371px;width:1080px;height:2558px;background:#1e1e1e;border:2px solid #3d3d3d;border-radius:10px;"></div>
<div class="r" style="left:2228px;top:469px;width:1076px;height:2px;background:#3d3d3d;"></div>
<div class="t s" style="left:2261.0px;top:406.2px;font-size:30px;color:#e8e8e8;font-weight:700;letter-spacing:-0.8px;">Processed output</div>
<div class="t s" style="left:2892.0px;top:406.2px;font-size:30px;color:#e8e8e8;font-weight:700;letter-spacing:-0.2px;">~26% decrease in size</div>
<svg class="r" style="left:3243px;top:409px;width:28px;height:28px;" viewBox="0 0 24 24" fill="none"><path d="M3 3.5h18l-7 8.2v7.8l-4 2.2v-10z" stroke="#d8d8d8" stroke-width="2.2" stroke-linejoin="round"/></svg>
<div class="r" style="left:2244px;top:499px;width:16px;height:16px;background:#0b47dd;border-radius:8px;"></div>
<div class="t m" style="left:2277.3px;top:497.1px;font-size:24px;color:#f2f2f2;transform:scaleY(1.14);transform-origin:0 18.39px;-webkit-text-stroke:0.15px #f2f2f2;">03:22:16 PM</div>
<div class="r" style="left:2451px;top:487px;width:98px;height:40px;background:#3b300b;border:2px solid #e6c13c;border-radius:20px;"></div>
<div class="t s" style="left:2473.3px;top:494.9px;font-size:23.5px;color:#f2c83d;letter-spacing:0.201px;-webkit-text-stroke:0.2px #f2c83d;">warn</div>
<div class="t m" style="left:2565.0px;top:497.1px;font-size:24px;color:#f2f2f2;transform:scaleY(1.14);transform-origin:0 18.39px;-webkit-text-stroke:0.15px #f2f2f2;">[Thu Oct 16 04:52:15 2025] [risk:warn] [pid 8…</div>
<svg class="r" style="left:3266px;top:495px;width:15px;height:24px;" viewBox="0 0 15 24" fill="none"><path d="M2 2 L13 12.0 L2 22" stroke="#e8e8e8" stroke-width="2.6" stroke-linecap="square"/></svg>
<div class="r" style="left:2244px;top:571px;width:16px;height:16px;background:#0b47dd;border-radius:8px;"></div>
<div class="t m" style="left:2277.3px;top:569.1px;font-size:24px;color:#f2f2f2;transform:scaleY(1.14);transform-origin:0 18.39px;-webkit-text-stroke:0.15px #f2f2f2;">03:22:16 PM</div>
<div class="r" style="left:2451px;top:559px;width:98px;height:40px;background:#3b300b;border:2px solid #e6c13c;border-radius:20px;"></div>
<div class="t s" style="left:2473.3px;top:566.9px;font-size:23.5px;color:#f2c83d;letter-spacing:0.201px;-webkit-text-stroke:0.2px #f2c83d;">warn</div>
<div class="t m" style="left:2565.0px;top:569.1px;font-size:24px;color:#f2f2f2;transform:scaleY(1.14);transform-origin:0 18.39px;-webkit-text-stroke:0.15px #f2f2f2;">[Thu Oct 16 04:52:15 2025] [demonstrate:warn]…</div>
<svg class="r" style="left:3266px;top:567px;width:15px;height:24px;" viewBox="0 0 15 24" fill="none"><path d="M2 2 L13 12.0 L2 22" stroke="#e8e8e8" stroke-width="2.6" stroke-linecap="square"/></svg>
<div class="r" style="left:2244px;top:643px;width:16px;height:16px;background:#0b47dd;border-radius:8px;"></div>
<div class="t m" style="left:2277.3px;top:641.1px;font-size:24px;color:#f2f2f2;transform:scaleY(1.14);transform-origin:0 18.39px;-webkit-text-stroke:0.15px #f2f2f2;">03:22:16 PM</div>
<div class="r" style="left:2451px;top:631px;width:91px;height:40px;background:#2a0303;border:2px solid #e0482a;border-radius:20px;"></div>
<div class="t s" style="left:2472.7px;top:638.9px;font-size:23.5px;color:#f05a37;letter-spacing:0.559px;-webkit-text-stroke:0.2px #f05a37;">fatal</div>
<div class="t m" style="left:2559.5px;top:641.1px;font-size:24px;color:#f2f2f2;transform:scaleY(1.14);transform-origin:0 18.39px;-webkit-text-stroke:0.15px #f2f2f2;">[Thu Oct 16 04:52:15 2025] [user:crit] [pid 19…</div>
<svg class="r" style="left:3266px;top:639px;width:15px;height:24px;" viewBox="0 0 15 24" fill="none"><path d="M2 2 L13 12.0 L2 22" stroke="#e8e8e8" stroke-width="2.6" stroke-linecap="square"/></svg>
<div class="r" style="left:2244px;top:715px;width:16px;height:16px;background:#0b47dd;border-radius:8px;"></div>
<div class="t m" style="left:2277.3px;top:713.1px;font-size:24px;color:#f2f2f2;transform:scaleY(1.14);transform-origin:0 18.39px;-webkit-text-stroke:0.15px #f2f2f2;">03:22:16 PM</div>
<div class="r" style="left:2451px;top:703px;width:97px;height:40px;background:#2a0303;border:2px solid #e0482a;border-radius:20px;"></div>
<div class="t s" style="left:2473.0px;top:710.9px;font-size:23.5px;color:#f05a37;letter-spacing:0.616px;-webkit-text-stroke:0.2px #f05a37;">error</div>
<div class="t m" style="left:2565.0px;top:713.1px;font-size:24px;color:#f2f2f2;transform:scaleY(1.14);transform-origin:0 18.39px;-webkit-text-stroke:0.15px #f2f2f2;">[Thu Oct 16 04:52:15 2025] [mike:error] [pid …</div>
<svg class="r" style="left:3266px;top:711px;width:15px;height:24px;" viewBox="0 0 15 24" fill="none"><path d="M2 2 L13 12.0 L2 22" stroke="#e8e8e8" stroke-width="2.6" stroke-linecap="square"/></svg>
<div class="r" style="left:2228px;top:759px;width:1076px;height:72px;background:#0f2d50;"></div>
<div class="r" style="left:2244px;top:787px;width:16px;height:16px;background:#0b47dd;border-radius:8px;"></div>
<div class="t m" style="left:2277.3px;top:785.1px;font-size:24px;color:#f2f2f2;transform:scaleY(1.14);transform-origin:0 18.39px;-webkit-text-stroke:0.15px #f2f2f2;">03:22:16 PM</div>
<div class="r" style="left:2451px;top:775px;width:91px;height:40px;background:#2a0303;border:2px solid #e0482a;border-radius:20px;"></div>
<div class="t s" style="left:2472.7px;top:782.9px;font-size:23.5px;color:#f05a37;letter-spacing:0.559px;-webkit-text-stroke:0.2px #f05a37;">fatal</div>
<div class="t m" style="left:2559.5px;top:785.1px;font-size:24px;color:#f2f2f2;transform:scaleY(1.14);transform-origin:0 18.39px;-webkit-text-stroke:0.15px #f2f2f2;">[Thu Oct 16 04:52:15 2025] [transfer:crit] [pi…</div>
<svg class="r" style="left:3259.5px;top:786.5px;width:25px;height:15px;overflow:visible;" viewBox="0 0 25 15" fill="none"><path d="M2 2 L12.5 13 L23 2" stroke="#ffffff" stroke-width="2.8" stroke-linecap="butt"/></svg>
<div class="r" style="left:2228px;top:831px;width:1076px;height:1090px;background:#27313c;"></div>
<div class="r" style="left:2244px;top:847px;width:1044px;height:1057px;background:#1e1e1e;border:2px solid #313131;border-radius:11px;"></div>
<div class="t s" style="left:2278.0px;top:896.7px;font-size:31px;color:#e8e8e8;font-weight:700;letter-spacing:-0.8px;">Log</div>
<div class="t m" style="left:2286.0px;top:998.6px;font-size:24px;color:#e8e8e8;transform:scaleY(1.14);transform-origin:0 18.39px;-webkit-text-stroke:0.15px #e8e8e8;">_type</div>
<div class="t m" style="left:2510.0px;top:998.6px;font-size:24px;color:#e8e8e8;transform:scaleY(1.14);transform-origin:0 18.39px;-webkit-text-stroke:0.15px #e8e8e8;">log</div>
<div class="r" style="left:2246px;top:1049px;width:1040px;height:2px;background:#444444;"></div>
<div class="r" style="left:2246px;top:1051px;width:1040px;height:80px;background:#215128;"></div>
<div class="t m" style="left:2286.0px;top:1082.6px;font-size:24px;color:#e8e8e8;transform:scaleY(1.14);transform-origin:0 18.39px;-webkit-text-stroke:0.15px #e8e8e8;">severity_text</div>
<div class="t m" style="left:2510.0px;top:1082.6px;font-size:24px;color:#e8e8e8;transform:scaleY(1.14);transform-origin:0 18.39px;-webkit-text-stroke:0.15px #e8e8e8;">fatal</div>
<div class="r" style="left:2246px;top:1131px;width:1040px;height:2px;background:#444444;"></div>
<div class="t m" style="left:2286.0px;top:1164.6px;font-size:24px;color:#e8e8e8;transform:scaleY(1.14);transform-origin:0 18.39px;-webkit-text-stroke:0.15px #e8e8e8;">timestamp</div>
<div class="t m" style="left:2510.0px;top:1164.6px;font-size:24px;color:#a8e6a3;transform:scaleY(1.14);transform-origin:0 18.39px;-webkit-text-stroke:0.15px #a8e6a3;">1760590335554</div>
<div class="t m" style="left:2802.0px;top:1167.7px;font-size:20px;color:#e8e8e8;transform:scaleY(1.14);transform-origin:0 15.32px;-webkit-text-stroke:0.15px #e8e8e8;">2025, Oct 16, 04:52:15.554 AM UTC</div>
<svg class="r" style="left:3217px;top:1162px;width:28px;height:28px;" viewBox="0 0 24 24" fill="none"><circle cx="12" cy="12" r="10" stroke="#e0e0e0" stroke-width="2.2"/><path d="M12 6.5V12h5" stroke="#e0e0e0" stroke-width="2.2" stroke-linecap="round"/></svg>
<div class="r" style="left:2246px;top:1214px;width:1040px;height:2px;background:#444444;"></div>
<div class="t s" style="left:2278.0px;top:1255.7px;font-size:31px;color:#e8e8e8;font-weight:700;letter-spacing:-0.8px;">Body</div>
<div class="t m" style="left:2286.0px;top:1356.6px;font-size:24px;color:#e8e8e8;transform:scaleY(1.14);transform-origin:0 18.39px;-webkit-text-stroke:0.15px #e8e8e8;">[Thu Oct 16 04:52:15 2025] [transfer:crit] [pid 6282:tid 2992]</div>
<div class="t m" style="left:2286.0px;top:1404.6px;font-size:24px;color:#e8e8e8;transform:scaleY(1.14);transform-origin:0 18.39px;-webkit-text-stroke:0.15px #e8e8e8;">[client: 216.241.50.73] Try to transmit the HDD program, maybe it</div>
<div class="t m" style="left:2286.0px;top:1452.6px;font-size:24px;color:#e8e8e8;transform:scaleY(1.14);transform-origin:0 18.39px;-webkit-text-stroke:0.15px #e8e8e8;">will quantify the virtual sensor!</div>
<div class="r" style="left:2246px;top:1503px;width:1040px;height:2px;background:#444444;"></div>
<div class="t s" style="left:2278.0px;top:1542.7px;font-size:31px;color:#e8e8e8;font-weight:700;letter-spacing:-0.8px;">Attributes</div>
<div class="r" style="left:2246px;top:1618px;width:1040px;height:80px;background:#215128;"></div>
<div class="t m" style="left:2286.0px;top:1649.6px;font-size:24px;color:#e8e8e8;transform:scaleY(1.14);transform-origin:0 18.39px;-webkit-text-stroke:0.15px #e8e8e8;">client_ip</div>
<div class="t m" style="left:2510.0px;top:1649.6px;font-size:24px;color:#e8e8e8;transform:scaleY(1.14);transform-origin:0 18.39px;-webkit-text-stroke:0.15px #e8e8e8;">216.241.50.73</div>
<div class="r" style="left:2246px;top:1698px;width:1040px;height:2px;background:#444444;"></div>
<div class="r" style="left:2246px;top:1700px;width:1040px;height:80px;background:#215128;"></div>
<div class="t m" style="left:2286.0px;top:1731.6px;font-size:24px;color:#e8e8e8;transform:scaleY(1.14);transform-origin:0 18.39px;-webkit-text-stroke:0.15px #e8e8e8;">log_timestamp</div>
<div class="t m" style="left:2510.0px;top:1731.6px;font-size:24px;color:#e8e8e8;transform:scaleY(1.14);transform-origin:0 18.39px;-webkit-text-stroke:0.15px #e8e8e8;">Thu Oct 16 04:52:15 2025</div>
<div class="r" style="left:2246px;top:1780px;width:1040px;height:2px;background:#444444;"></div>
<div class="r" style="left:2246px;top:1782px;width:1040px;height:80px;background:#215128;"></div>
<div class="t m" style="left:2286.0px;top:1813.6px;font-size:24px;color:#e8e8e8;transform:scaleY(1.14);transform-origin:0 18.39px;-webkit-text-stroke:0.15px #e8e8e8;">module</div>
<div class="t m" style="left:2510.0px;top:1813.6px;font-size:24px;color:#e8e8e8;transform:scaleY(1.14);transform-origin:0 18.39px;-webkit-text-stroke:0.15px #e8e8e8;">transfer</div>
<div class="r" style="left:2246px;top:1862px;width:1040px;height:2px;background:#444444;"></div>
<div class="r" style="left:1125px;top:1621px;width:4px;height:4px;background:#dddddd;"></div>
<div class="r" style="left:1125px;top:1629px;width:4px;height:4px;background:#dddddd;"></div>
<div class="r" style="left:1125px;top:1637px;width:4px;height:4px;background:#dddddd;"></div>
<div class="r" style="left:1125px;top:1645px;width:4px;height:4px;background:#dddddd;"></div>
<div class="r" style="left:1125px;top:1653px;width:4px;height:4px;background:#dddddd;"></div>
<div class="r" style="left:1125px;top:1661px;width:4px;height:4px;background:#dddddd;"></div>
<div class="r" style="left:1125px;top:1669px;width:4px;height:4px;background:#dddddd;"></div>
<div class="r" style="left:1125px;top:1677px;width:4px;height:4px;background:#dddddd;"></div>
<div class="r" style="left:1131px;top:1621px;width:4px;height:4px;background:#dddddd;"></div>
<div class="r" style="left:1131px;top:1629px;width:4px;height:4px;background:#dddddd;"></div>
<div class="r" style="left:1131px;top:1637px;width:4px;height:4px;background:#dddddd;"></div>
<div class="r" style="left:1131px;top:1645px;width:4px;height:4px;background:#dddddd;"></div>
<div class="r" style="left:1131px;top:1653px;width:4px;height:4px;background:#dddddd;"></div>
<div class="r" style="left:1131px;top:1661px;width:4px;height:4px;background:#dddddd;"></div>
<div class="r" style="left:1131px;top:1669px;width:4px;height:4px;background:#dddddd;"></div>
<div class="r" style="left:1131px;top:1677px;width:4px;height:4px;background:#dddddd;"></div>
<div class="r" style="left:2205px;top:1621px;width:4px;height:4px;background:#dddddd;"></div>
<div class="r" style="left:2205px;top:1629px;width:4px;height:4px;background:#dddddd;"></div>
<div class="r" style="left:2205px;top:1637px;width:4px;height:4px;background:#dddddd;"></div>
<div class="r" style="left:2205px;top:1645px;width:4px;height:4px;background:#dddddd;"></div>
<div class="r" style="left:2205px;top:1653px;width:4px;height:4px;background:#dddddd;"></div>
<div class="r" style="left:2205px;top:1661px;width:4px;height:4px;background:#dddddd;"></div>
<div class="r" style="left:2205px;top:1669px;width:4px;height:4px;background:#dddddd;"></div>
<div class="r" style="left:2205px;top:1677px;width:4px;height:4px;background:#dddddd;"></div>
<div class="r" style="left:2211px;top:1621px;width:4px;height:4px;background:#dddddd;"></div>
<div class="r" style="left:2211px;top:1629px;width:4px;height:4px;background:#dddddd;"></div>
<div class="r" style="left:2211px;top:1637px;width:4px;height:4px;background:#dddddd;"></div>
<div class="r" style="left:2211px;top:1645px;width:4px;height:4px;background:#dddddd;"></div>
<div class="r" style="left:2211px;top:1653px;width:4px;height:4px;background:#dddddd;"></div>
<div class="r" style="left:2211px;top:1661px;width:4px;height:4px;background:#dddddd;"></div>
<div class="r" style="left:2211px;top:1669px;width:4px;height:4px;background:#dddddd;"></div>
<div class="r" style="left:2211px;top:1677px;width:4px;height:4px;background:#dddddd;"></div>
<div class="r" style="left:34px;top:2946px;width:119px;height:64px;background:#2a72b8;border-radius:6px;"></div>
<div class="t s" style="left:60.7px;top:2962.6px;font-size:30px;color:#ffffff;font-weight:700;letter-spacing:-1.3px;">Save</div>
<div class="r" style="left:169px;top:2946px;width:150px;height:64px;border:3px solid #4aa3ef;border-radius:6px;"></div>
<div class="t s" style="left:197.0px;top:2962.6px;font-size:30px;color:#6cb6f5;font-weight:700;letter-spacing:-0.6px;">Cancel</div>
</body></html>
